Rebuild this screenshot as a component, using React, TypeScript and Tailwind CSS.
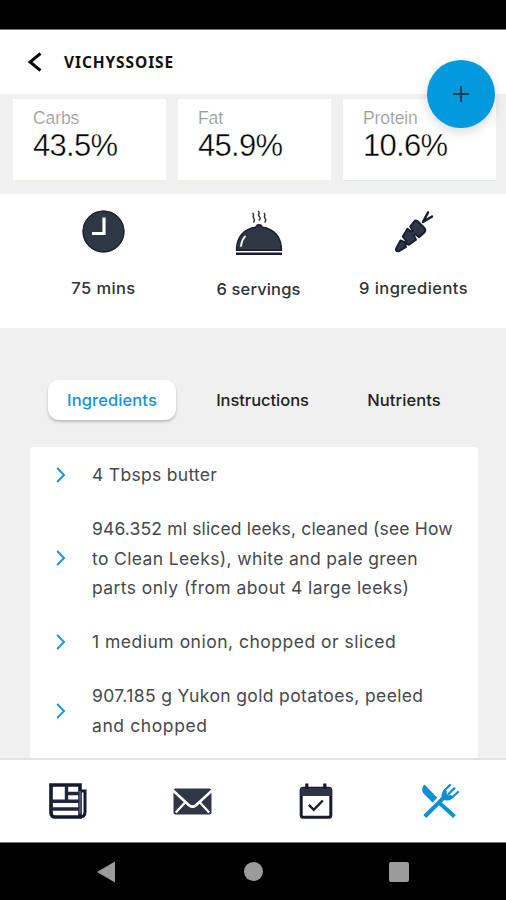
import { useState } from 'react'

type Macro = { label: string; value: string; border: string }
type Line = { text: string; tracking: string }

const MACROS: Macro[] = [
  { label: 'Carbs', value: '43.5%', border: 'border-[#fde8e0]' },
  { label: 'Fat', value: '45.9%', border: 'border-[#fdeae0]' },
  { label: 'Protein', value: '10.6%', border: 'border-[#d6eafc]' },
]

const TABS = [
  { name: 'Ingredients', width: 'w-32', tracking: 'tracking-[0.1px]' },
  { name: 'Instructions', width: 'w-[173px]', tracking: 'tracking-[-0.05px]' },
  { name: 'Nutrients', width: 'w-[110px]', tracking: 'tracking-[0.1px]' },
]

const INGREDIENTS: Line[][] = [
  [{ text: '4 Tbsps butter', tracking: 'tracking-[0.3px]' }],
  [
    { text: '946.352 ml sliced leeks, cleaned (see How', tracking: 'tracking-[0.15px]' },
    { text: 'to Clean Leeks), white and pale green', tracking: 'tracking-[0.37px]' },
    { text: 'parts only (from about 4 large leeks)', tracking: 'tracking-[0.43px]' },
  ],
  [{ text: '1 medium onion, chopped or sliced', tracking: 'tracking-[0.5px]' }],
  [
    { text: '907.185 g Yukon gold potatoes, peeled', tracking: 'tracking-[0.36px]' },
    { text: 'and chopped', tracking: 'tracking-[0.6px]' },
  ],
]

function ClockIcon() {
  return (
    <svg width="43" height="43" viewBox="0 0 43 43" fill="none">
      <circle cx="21.5" cy="21.5" r="21" fill="#2f3644" />
      <circle cx="21.5" cy="21.5" r="20.4" stroke="#1c2233" strokeWidth="1.2" />
      <path d="M22 7.500V23.500H10" stroke="#fff" strokeWidth="3.2" />
    </svg>
  )
}

function ClocheIcon() {
  return (
    <svg width="48" height="46" viewBox="0 0 48 46" fill="none">
      <path d="M1.500 40.300C1.500 27 9 18.600 20.800 17.200a3.300 3.300 0 0 1 6.400 0C39 18.600 46.500 27 46.500 40.300Z" fill="#2f3644" stroke="#171d2d" strokeWidth="1.4" />
      <path d="M6 36C6.500 31.500 7.800 28.800 10 26.500" stroke="#fff" strokeWidth="1.8" strokeLinecap="round" />
      <path d="M1 43.800H47" stroke="#171d2d" strokeWidth="2.6" />
      <path d="M17.500 3c2.500 2-.5 3.200 1.200 5.200s.8 2.800-.4 4.200M23 1c3 2-.8 3.500 1.200 5.500s.8 2.500-.4 4M28.800 3c2.500 2-.5 3.200 1.200 5.200s.8 2.800-.4 4.200" stroke="#2f3644" strokeWidth="1.5" />
    </svg>
  )
}

function CarrotIcon() {
  return (
    <svg width="40" height="43" viewBox="0 0 40 43" fill="none">
      <path
        d="M2.500 37.800 6.500 30.500 11.500 32.500 12.500 31 8.800 26.500 13.500 18.800 17.300 21.800 18.800 20.600 16.200 16.500 20 11.600Q22 9.500 24.200 11.800L30.300 18Q32.300 20.400 30.300 22.500L25 27.200 21.200 24 19.800 25.500 22 29.800 15 34.800 12.300 33.800 11 35.200 12 37 5.500 40.800Q3 42 2 40 1.700 39 2.500 37.800Z"
        fill="#2f3644"
        stroke="#1a2030"
        strokeWidth="2"
        strokeLinejoin="round"
      />
      <path d="M34 2.500 29 12 38 6.500" stroke="#1a2030" strokeWidth="2.6" strokeLinecap="round" strokeLinejoin="round" />
    </svg>
  )
}

function NewsIcon() {
  return (
    <svg width="38" height="36" viewBox="0 0 38 36" fill="none">
      <path d="M2 2H31V34H6Q2 34 2 30Z" stroke="#151a30" strokeWidth="3.6" />
      <path d="M31 8H36V29Q36 34 31 34" stroke="#151a30" strokeWidth="3" />
      <path d="M17.500 2V18M17.500 10.500H31M2 18.300H31M2 26H31" stroke="#20263c" strokeWidth="3.4" />
      <path d="M31 8V31" stroke="#4c546c" strokeWidth="2.2" />
    </svg>
  )
}

function MailIcon() {
  return (
    <svg width="39" height="27" viewBox="0 0 39 27" fill="none">
      <rect x="0.5" y="0.5" width="38" height="26" rx="2" fill="#2f3644" />
      <path d="M0 2.500 16 17.200Q19.500 20.200 23 17.200L39 2.500" stroke="#fff" strokeWidth="2.6" />
      <path d="M2.800 24.500 12.500 14M36.200 24.500 26.500 14" stroke="#fff" strokeWidth="2.3" />
    </svg>
  )
}

function CalendarIcon() {
  return (
    <svg width="34" height="36" viewBox="0 0 34 36" fill="none">
      <rect x="2.2" y="5.2" width="29.6" height="29" rx="2" stroke="#171b2b" strokeWidth="3" />
      <path d="M2 5H32V13H2Z" fill="#2f3448" />
      <path d="M7.800 0.500V6M25.800 0.500V6" stroke="#171b2b" strokeWidth="3.2" />
      <path d="M9.800 21.800 14.800 26.800 23.800 17.500" stroke="#171b2b" strokeWidth="2.4" />
    </svg>
  )
}

function UtensilsIcon() {
  return (
    <svg width="38" height="36" viewBox="0 0 38 36" fill="none">
      <path d="M3.500 1.500C.5 4 .5 8.500 3 11L11.500 19.500 16.300 14.800Z" fill="#0e8fd2" />
      <path d="M3.800 33.500 24 13.500M18.500 20 33.500 33.500" stroke="#0e8fd2" strokeWidth="4" />
      <path d="M29 2 23 8M33.300 5.200 27.500 11M37 9 31 14.500" stroke="#0e8fd2" strokeWidth="2.3" strokeLinecap="round" />
      <path d="M23.800 6.200C20.500 9.500 20 12 21 14.500Q22.500 18 26.500 17.500C29.500 17.300 30.800 15.800 32.300 14.200L29.800 11.800 27.500 12.500 25.500 10.500 26 8.500Z" fill="#0e8fd2" />
    </svg>
  )
}

export default function App() {
  const [tab, setTab] = useState('Ingredients')

  return (
    <div className="relative flex h-[900px] w-[506px] flex-col overflow-hidden bg-[#f0f0f0] font-['Inter',sans-serif]">
      <div className="h-[30px] shrink-0 border-b border-[#777] bg-black" />

      <header className="flex h-16 shrink-0 items-center bg-white pl-7">
        <svg width="14" height="20" viewBox="0 0 14 20" fill="none">
          <path d="M12.500 1.500 2 10l10.500 8.500" stroke="#0b0b0b" strokeWidth="3" />
        </svg>
        <h1 className="mt-0.5 ml-[22px] font-['Noto_Sans',sans-serif] text-[15.5px] font-bold tracking-[0.9px] text-[#111]">VICHYSSOISE</h1>
      </header>

      {/* Macro split */}
      <section className="flex h-[100px] shrink-0 gap-3 px-[13px] pt-[5px] font-['Liberation_Sans',sans-serif]">
        {MACROS.map(m => (
          <div key={m.label} className={`h-[82px] w-[153px] shrink-0 border-b bg-white pt-2 pl-5 ${m.border}`}>
            <div className="text-[17.5px] leading-[22px] tracking-[-0.1px] text-[#999] [-webkit-text-stroke:0.2px_white]">{m.label}</div>
            <div className="text-[31px] leading-[33px] tracking-[-0.7px] text-black [-webkit-text-stroke:0.4px_white]">{m.value}</div>
          </div>
        ))}
      </section>

      {/* Time, servings, ingredient count */}
      <section className="flex h-[134px] shrink-0 bg-white pl-[26px] text-[16.5px] font-[450] text-[#303238]">
        <div className="flex w-[155px] flex-col items-center pt-4">
          <ClockIcon />
          <span className="mt-[23px] leading-6 tracking-[0.4px]">75 mins</span>
        </div>
        <div className="flex w-[155px] flex-col items-center pt-4">
          <ClocheIcon />
          <span className="mt-[21px] leading-6 tracking-[0.15px]">6 servings</span>
        </div>
        <div className="flex w-[155px] flex-col items-center pt-4">
          <CarrotIcon />
          <span className="mt-[23px] leading-6 tracking-[0.45px]">9 ingredients</span>
        </div>
      </section>

      <nav className="flex shrink-0 pt-[52px] pl-12">
        {TABS.map(t => (
          <button
            key={t.name}
            onClick={() => setTab(t.name)}
            className={`h-10 rounded-[11px] text-[16.5px] font-[450] ${t.width} ${t.tracking} ${tab === t.name ? 'bg-white text-[#1793d8] shadow-[0_2px_3px_rgba(0,0,0,0.22)]' : 'text-[#222]'}`}
          >
            {t.name}
          </button>
        ))}
      </nav>

      <main className="mt-[27px] ml-[30px] flex min-h-0 w-[448px] flex-1 flex-col gap-[24.5px] overflow-hidden rounded-t-sm bg-white pt-[13px]">
        {INGREDIENTS.map(lines => (
          <div key={lines[0].text} className="flex shrink-0 items-center pl-[26px]">
            <svg width="10" height="16" viewBox="0 0 10 16" fill="none" className="shrink-0">
              <path d="M1.200 1 8 8l-6.800 7" stroke="#1d96dc" strokeWidth="2" />
            </svg>
            <p className="ml-[26px] text-[17.5px] leading-[29.6px] whitespace-nowrap text-[#45484d]">
              {lines.map(l => <span key={l.text} className={`block ${l.tracking}`}>{l.text}</span>)}
            </p>
          </div>
        ))}
      </main>

      <footer className="flex h-[84px] shrink-0 items-center border-t-2 border-[#e4e4e4] bg-white">
        <button className="flex w-[136px] justify-center"><NewsIcon /></button>
        <button className="flex w-28 justify-center"><MailIcon /></button>
        <button className="flex w-[136px] justify-center"><CalendarIcon /></button>
        <button className="flex w-28 justify-center"><UtensilsIcon /></button>
      </footer>

      {/* Android system bar */}
      <div className="flex h-[58px] shrink-0 items-center border-t border-[#777] bg-black pl-[97px]">
        <svg width="18" height="22" viewBox="0 0 18 22"><path d="M0 11 18 0.500V21.500Z" fill="#9b9b9b" /></svg>
        <div className="ml-[129px] size-[19px] rounded-full bg-[#9b9b9b]" />
        <div className="ml-[126px] size-5 rounded-[2px] bg-[#9b9b9b]" />
      </div>

      <button className="absolute top-[60px] right-[11px] flex size-[68px] items-center justify-center rounded-full bg-[#0399de] shadow-[0_4px_12px_rgba(0,0,0,0.15)]">
        <svg width="18" height="18" viewBox="0 0 18 18"><path d="M9 1v16M1 9h16" stroke="#17415b" strokeWidth="2.2" /></svg>
      </button>
    </div>
  )
}
